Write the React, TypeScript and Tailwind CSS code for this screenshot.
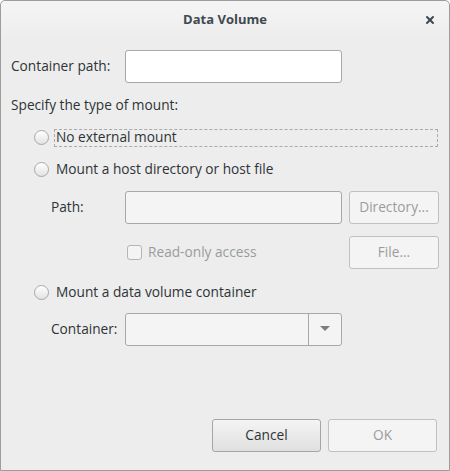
import { X } from "lucide-react";

const font = { fontFamily: '"Open Sans", "DejaVu Sans", sans-serif' };

function Radio({ label, focused }: { label: string; focused?: boolean }) {
  return (
    <div className="flex h-[18px] items-center">
      <span className="ml-[33px] h-[15px] w-[15px] shrink-0 rounded-full border border-[#a8a8a8] bg-gradient-to-b from-[#ffffff] to-[#e2e2e2]" />
      <span
        className={`ml-[5px] flex h-[18px] items-center pl-px text-[13.7px] text-[#2e3436] ${
          focused ? "flex-1 border border-dashed border-[#aaaaaa] mr-[11px]" : "border border-transparent"
        }`}
      >
        {label}
      </span>
    </div>
  );
}

function Button({ label, disabled, className }: { label: string; disabled?: boolean; className?: string }) {
  return (
    <div
      className={`flex h-[33px] items-center justify-center rounded-[3px] border text-[13.7px] ${
        disabled
          ? "border-[#c0c0c0] bg-[#f4f4f4] text-[#9a9c9c]"
          : "border-[#a5a5a5] bg-gradient-to-b from-[#f4f4f4] to-[#e0e0e0] text-[#2e3436]"
      } ${className ?? ""}`}
    >
      {label}
    </div>
  );
}

export default function App() {
  return (
    <div style={font} className="h-[471px] w-[450px] overflow-hidden bg-white">
      <div className="flex h-full flex-col rounded-t-[5px] border border-[#9c9c9c] bg-[#ededed]">
        {/* Title bar */}
        <div className="relative flex h-[38px] items-center justify-center rounded-t-[5px] bg-gradient-to-b from-[#f5f5f5] to-[#ededed]">
          <span className="text-[13px] font-bold text-[#3f4a50]">Data Volume</span>
          <X className="absolute right-[13px] top-[13px] h-[12px] w-[12px] text-[#3f4a50]" strokeWidth={4} />
        </div>

        {/* Container path */}
        <div className="mt-[11px] flex h-[33px] items-center">
          <span className="ml-[10px] w-[114px] text-[13.7px] text-[#2e3436]">Container path:</span>
          <div className="h-[33px] w-[217px] rounded-[3px] border border-[#a8a8a8] bg-white" />
        </div>

        <div className="ml-[10px] mt-[12px] text-[13.7px] text-[#2e3436]">Specify the type of mount:</div>

        <div className="mt-[13px]">
          <Radio label="No external mount" focused />
        </div>
        <div className="mt-[14px]">
          <Radio label="Mount a host directory or host file" />
        </div>

        {/* Path row */}
        <div className="mt-[12px] flex h-[33px] items-center">
          <span className="ml-[50px] w-[74px] text-[13.7px] text-[#2e3436]">Path:</span>
          <div className="h-[33px] w-[217px] rounded-[3px] border border-[#a8a8a8] bg-[#f4f4f4]" />
          <Button label="Directory..." disabled className="ml-[7px] w-[90px]" />
        </div>

        {/* Read-only row */}
        <div className="mt-[12px] flex h-[33px] items-center">
          <div className="ml-[126px] flex w-[217px] items-center">
            <span className="h-[15px] w-[15px] rounded-[3px] border border-[#b5b5b5] bg-[#f4f4f4]" />
            <span className="ml-[6px] text-[13.7px] text-[#9a9c9c]">Read-only access</span>
          </div>
          <Button label="File..." disabled className="ml-[5px] w-[90px]" />
        </div>

        <div className="mt-[15px]">
          <Radio label="Mount a data volume container" />
        </div>

        {/* Container combo */}
        <div className="mt-[11px] flex h-[33px] items-center">
          <span className="ml-[50px] w-[74px] text-[13.7px] text-[#2e3436]">Container:</span>
          <div className="flex h-[33px] w-[217px] rounded-[3px] border border-[#a8a8a8] bg-[#f4f4f4]">
            <div className="flex-1" />
            <div className="flex w-[33px] items-center justify-center border-l border-[#a8a8a8]">
              <svg width="10" height="6" viewBox="0 0 10 6">
                <path d="M0 0 L10 0 L5 5 Z" fill="#7b7e80" />
              </svg>
            </div>
          </div>
        </div>

        <div className="flex-1" />

        {/* Buttons */}
        <div className="mb-[18px] flex justify-end gap-[7px] pr-[12px]">
          <Button label="Cancel" className="w-[109px]" />
          <Button label="OK" disabled className="w-[109px]" />
        </div>
      </div>
    </div>
  );
}
